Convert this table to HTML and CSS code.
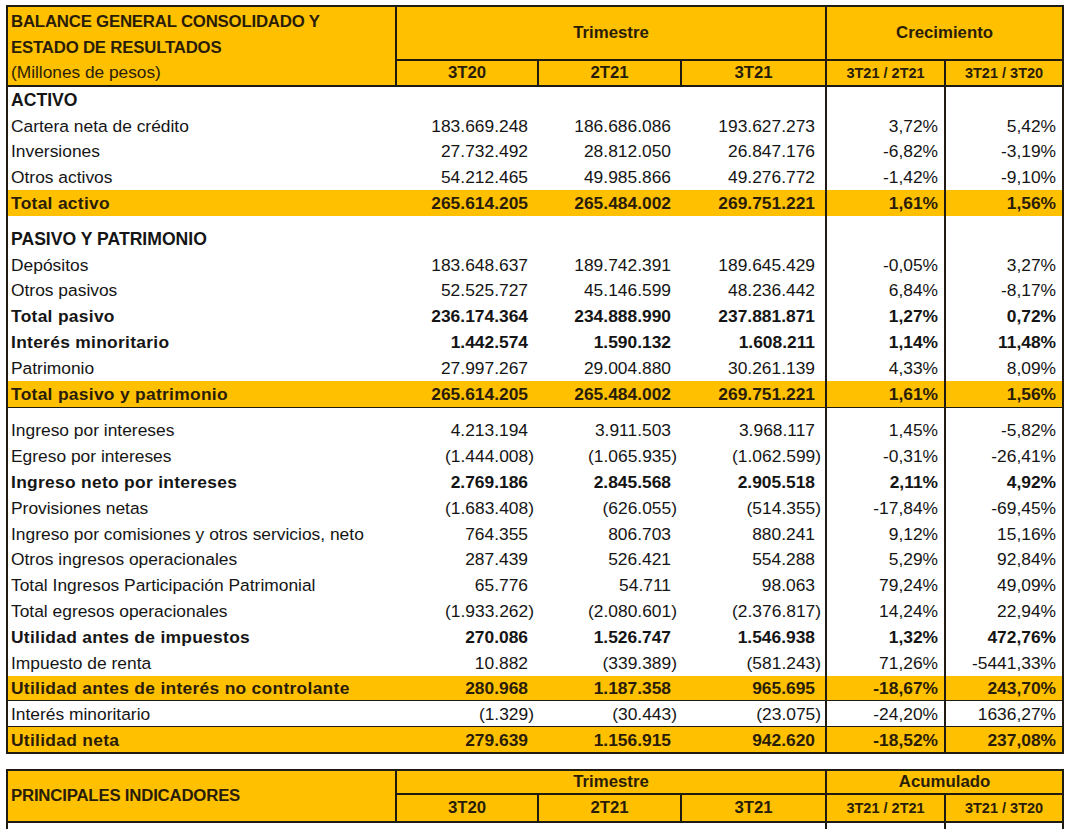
FILE: index.html
```html
<!DOCTYPE html>
<html lang="es">
<head>
<meta charset="utf-8">
<title>Balance general consolidado</title>
<link rel="stylesheet" href="styles.css">
</head>
<body>
<table class="grid main">
  <colgroup>
    <col class="w-label"><col class="w-a"><col class="w-b"><col class="w-c"><col class="w-d"><col class="w-e">
  </colgroup>
  <thead>
    <tr class="h1">
      <th class="hl" rowspan="2"><div class="ttl">BALANCE GENERAL CONSOLIDADO Y</div><div class="ttl">ESTADO DE RESULTADOS</div><div class="sub">(Millones de pesos)</div></th>
      <th colspan="3" class="hc">Trimestre</th>
      <th colspan="2" class="hc">Crecimiento</th>
    </tr>
    <tr class="h2">
      <th class="hc">3T20</th><th class="hc">2T21</th><th class="hc">3T21</th><th class="hc sm">3T21 / 2T21</th><th class="hc sm">3T21 / 3T20</th>
    </tr>
  </thead>
  <tbody>
    <tr class="sec"><td class="l">ACTIVO</td><td class="n"></td><td class="n"></td><td class="n"></td><td class="p p1"></td><td class="p p2"></td></tr>
    <tr><td class="l">Cartera neta de crédito</td><td class="n">183.669.248</td><td class="n">186.686.086</td><td class="n">193.627.273</td><td class="p p1">3,72%</td><td class="p p2">5,42%</td></tr>
    <tr><td class="l">Inversiones</td><td class="n">27.732.492</td><td class="n">28.812.050</td><td class="n">26.847.176</td><td class="p p1">-6,82%</td><td class="p p2">-3,19%</td></tr>
    <tr><td class="l">Otros activos</td><td class="n">54.212.465</td><td class="n">49.985.866</td><td class="n">49.276.772</td><td class="p p1">-1,42%</td><td class="p p2">-9,10%</td></tr>
    <tr class="tot"><td class="l">Total activo</td><td class="n">265.614.205</td><td class="n">265.484.002</td><td class="n">269.751.221</td><td class="p p1">1,61%</td><td class="p p2">1,56%</td></tr>
    <tr class="sp"><td class="l"></td><td></td><td></td><td></td><td class="p1"></td><td class="p2"></td></tr>
    <tr class="sec"><td class="l">PASIVO Y PATRIMONIO</td><td class="n"></td><td class="n"></td><td class="n"></td><td class="p p1"></td><td class="p p2"></td></tr>
    <tr><td class="l">Depósitos</td><td class="n">183.648.637</td><td class="n">189.742.391</td><td class="n">189.645.429</td><td class="p p1">-0,05%</td><td class="p p2">3,27%</td></tr>
    <tr><td class="l">Otros pasivos</td><td class="n">52.525.727</td><td class="n">45.146.599</td><td class="n">48.236.442</td><td class="p p1">6,84%</td><td class="p p2">-8,17%</td></tr>
    <tr class="b"><td class="l">Total pasivo</td><td class="n">236.174.364</td><td class="n">234.888.990</td><td class="n">237.881.871</td><td class="p p1">1,27%</td><td class="p p2">0,72%</td></tr>
    <tr class="b"><td class="l">Interés minoritario</td><td class="n">1.442.574</td><td class="n">1.590.132</td><td class="n">1.608.211</td><td class="p p1">1,14%</td><td class="p p2">11,48%</td></tr>
    <tr><td class="l">Patrimonio</td><td class="n">27.997.267</td><td class="n">29.004.880</td><td class="n">30.261.139</td><td class="p p1">4,33%</td><td class="p p2">8,09%</td></tr>
    <tr class="tot bb"><td class="l">Total pasivo y patrimonio</td><td class="n">265.614.205</td><td class="n">265.484.002</td><td class="n">269.751.221</td><td class="p p1">1,61%</td><td class="p p2">1,56%</td></tr>
    <tr class="sp"><td class="l"></td><td></td><td></td><td></td><td class="p1"></td><td class="p2"></td></tr>
    <tr><td class="l">Ingreso por intereses</td><td class="n">4.213.194</td><td class="n">3.911.503</td><td class="n">3.968.117</td><td class="p p1">1,45%</td><td class="p p2">-5,82%</td></tr>
    <tr><td class="l">Egreso por intereses</td><td class="n neg">(1.444.008)</td><td class="n neg">(1.065.935)</td><td class="n neg">(1.062.599)</td><td class="p p1">-0,31%</td><td class="p p2">-26,41%</td></tr>
    <tr class="b"><td class="l">Ingreso neto por intereses</td><td class="n">2.769.186</td><td class="n">2.845.568</td><td class="n">2.905.518</td><td class="p p1">2,11%</td><td class="p p2">4,92%</td></tr>
    <tr><td class="l">Provisiones netas</td><td class="n neg">(1.683.408)</td><td class="n neg">(626.055)</td><td class="n neg">(514.355)</td><td class="p p1">-17,84%</td><td class="p p2">-69,45%</td></tr>
    <tr><td class="l">Ingreso por comisiones y otros servicios, neto</td><td class="n">764.355</td><td class="n">806.703</td><td class="n">880.241</td><td class="p p1">9,12%</td><td class="p p2">15,16%</td></tr>
    <tr><td class="l">Otros ingresos operacionales</td><td class="n">287.439</td><td class="n">526.421</td><td class="n">554.288</td><td class="p p1">5,29%</td><td class="p p2">92,84%</td></tr>
    <tr><td class="l">Total Ingresos Participación Patrimonial</td><td class="n">65.776</td><td class="n">54.711</td><td class="n">98.063</td><td class="p p1">79,24%</td><td class="p p2">49,09%</td></tr>
    <tr><td class="l">Total egresos operacionales</td><td class="n neg">(1.933.262)</td><td class="n neg">(2.080.601)</td><td class="n neg">(2.376.817)</td><td class="p p1">14,24%</td><td class="p p2">22,94%</td></tr>
    <tr class="b"><td class="l">Utilidad antes de impuestos</td><td class="n">270.086</td><td class="n">1.526.747</td><td class="n">1.546.938</td><td class="p p1">1,32%</td><td class="p p2">472,76%</td></tr>
    <tr><td class="l">Impuesto de renta</td><td class="n">10.882</td><td class="n neg">(339.389)</td><td class="n neg">(581.243)</td><td class="p p1">71,26%</td><td class="p p2">-5441,33%</td></tr>
    <tr class="tot bb tight"><td class="l">Utilidad antes de interés no controlante</td><td class="n">280.968</td><td class="n">1.187.358</td><td class="n">965.695</td><td class="p p1">-18,67%</td><td class="p p2">243,70%</td></tr>
    <tr class="bb tight"><td class="l">Interés minoritario</td><td class="n neg">(1.329)</td><td class="n neg">(30.443)</td><td class="n neg">(23.075)</td><td class="p p1">-24,20%</td><td class="p p2">1636,27%</td></tr>
    <tr class="tot last tight"><td class="l">Utilidad neta</td><td class="n">279.639</td><td class="n">1.156.915</td><td class="n">942.620</td><td class="p p1">-18,52%</td><td class="p p2">237,08%</td></tr>
  </tbody>
</table>

<table class="grid ind">
  <colgroup>
    <col class="w-label"><col class="w-a"><col class="w-b"><col class="w-c"><col class="w-d"><col class="w-e">
  </colgroup>
  <thead>
    <tr class="i1">
      <th class="hl mid" rowspan="2"><span class="ttl">PRINCIPALES INDICADORES</span></th>
      <th colspan="3" class="hc">Trimestre</th>
      <th colspan="2" class="hc">Acumulado</th>
    </tr>
    <tr class="i2">
      <th class="hc">3T20</th><th class="hc">2T21</th><th class="hc">3T21</th><th class="hc sm">3T21 / 2T21</th><th class="hc sm">3T21 / 3T20</th>
    </tr>
  </thead>
  <tbody>
    <tr class="sec"><td class="l">RENTABILIDAD</td><td class="n"></td><td class="n"></td><td class="n"></td><td class="p p1"></td><td class="p p2"></td></tr>
  </tbody>
</table>
</body>
</html>
```

FILE: styles.css
```css
html, body {
  margin: 0;
  background: #ffffff;
}

body {
  padding: 5px 0 0 6px;
  height: 829px;
  box-sizing: border-box;
  overflow: hidden;
  font-family: "Liberation Sans", Arial, sans-serif;
  color: #151515;
}

.grid {
  border-collapse: collapse;
  table-layout: fixed;
  width: 1056px;
}

.w-label { width: 389px; }
.w-a { width: 142px; }
.w-b { width: 143px; }
.w-c { width: 145px; }
.w-d { width: 119px; }
.w-e { width: 118px; }

/* ---------- header ---------- */
th {
  background: #ffc000;
  color: #2a1d08;
  border: 2px solid #1f1a12;
  padding: 0;
  font-weight: bold;
  font-size: 16.8px;
}

.hl {
  text-align: left;
  vertical-align: top;
  padding: 2px 0 0 3px;
  letter-spacing: -0.2px;
}

.hl .ttl {
  line-height: 25.5px;
  font-weight: bold;
}

.hl .sub {
  line-height: 25px;
  font-weight: normal;
  font-size: 17.3px;
  letter-spacing: 0;
}

.hl.mid {
  vertical-align: middle;
  padding-top: 0;
}

.hc {
  text-align: center;
  vertical-align: middle;
}

.hc.sm {
  font-size: 14.5px;
}

.main .h1 { height: 53px; }
.main .h2 { height: 26px; }

.ind {
  margin-top: 15px;
}

.ind .i1 { height: 24px; }
.ind .i2 { height: 28px; }

/* ---------- body ---------- */
td {
  height: 25.8px;
  padding: 0;
  font-size: 17.4px;
  line-height: 20px;
  white-space: nowrap;
  vertical-align: middle;
}

td.l {
  text-align: left;
  padding-left: 3px;
  border-left: 2px solid #1f1a12;
}

td.n {
  text-align: right;
  padding-right: 10px;
}

td.n.neg {
  padding-right: 4px;
}

td.p {
  text-align: right;
  padding-right: 6px;
}

td.p1 {
  border-left: 2px solid #1f1a12;
}

td.p2 {
  border-left: 2px solid #1f1a12;
  border-right: 2px solid #1f1a12;
}

tr.sp td {
  height: 10px;
}

tr.tight td {
  height: 24.8px;
}

tr.sec td,
tr.b td,
tr.tot td {
  font-weight: bold;
}

tr.sec td.l {
  font-size: 17.6px;
}

tr.b td.l,
tr.tot td.l {
  letter-spacing: 0.3px;
}

tr.tot td {
  background: #ffc000;
  color: #2a1d08;
}

tr.bb td {
  border-bottom: 1px solid #1f1a12;
}

tr.last td {
  border-bottom: 2px solid #1f1a12;
}
```
